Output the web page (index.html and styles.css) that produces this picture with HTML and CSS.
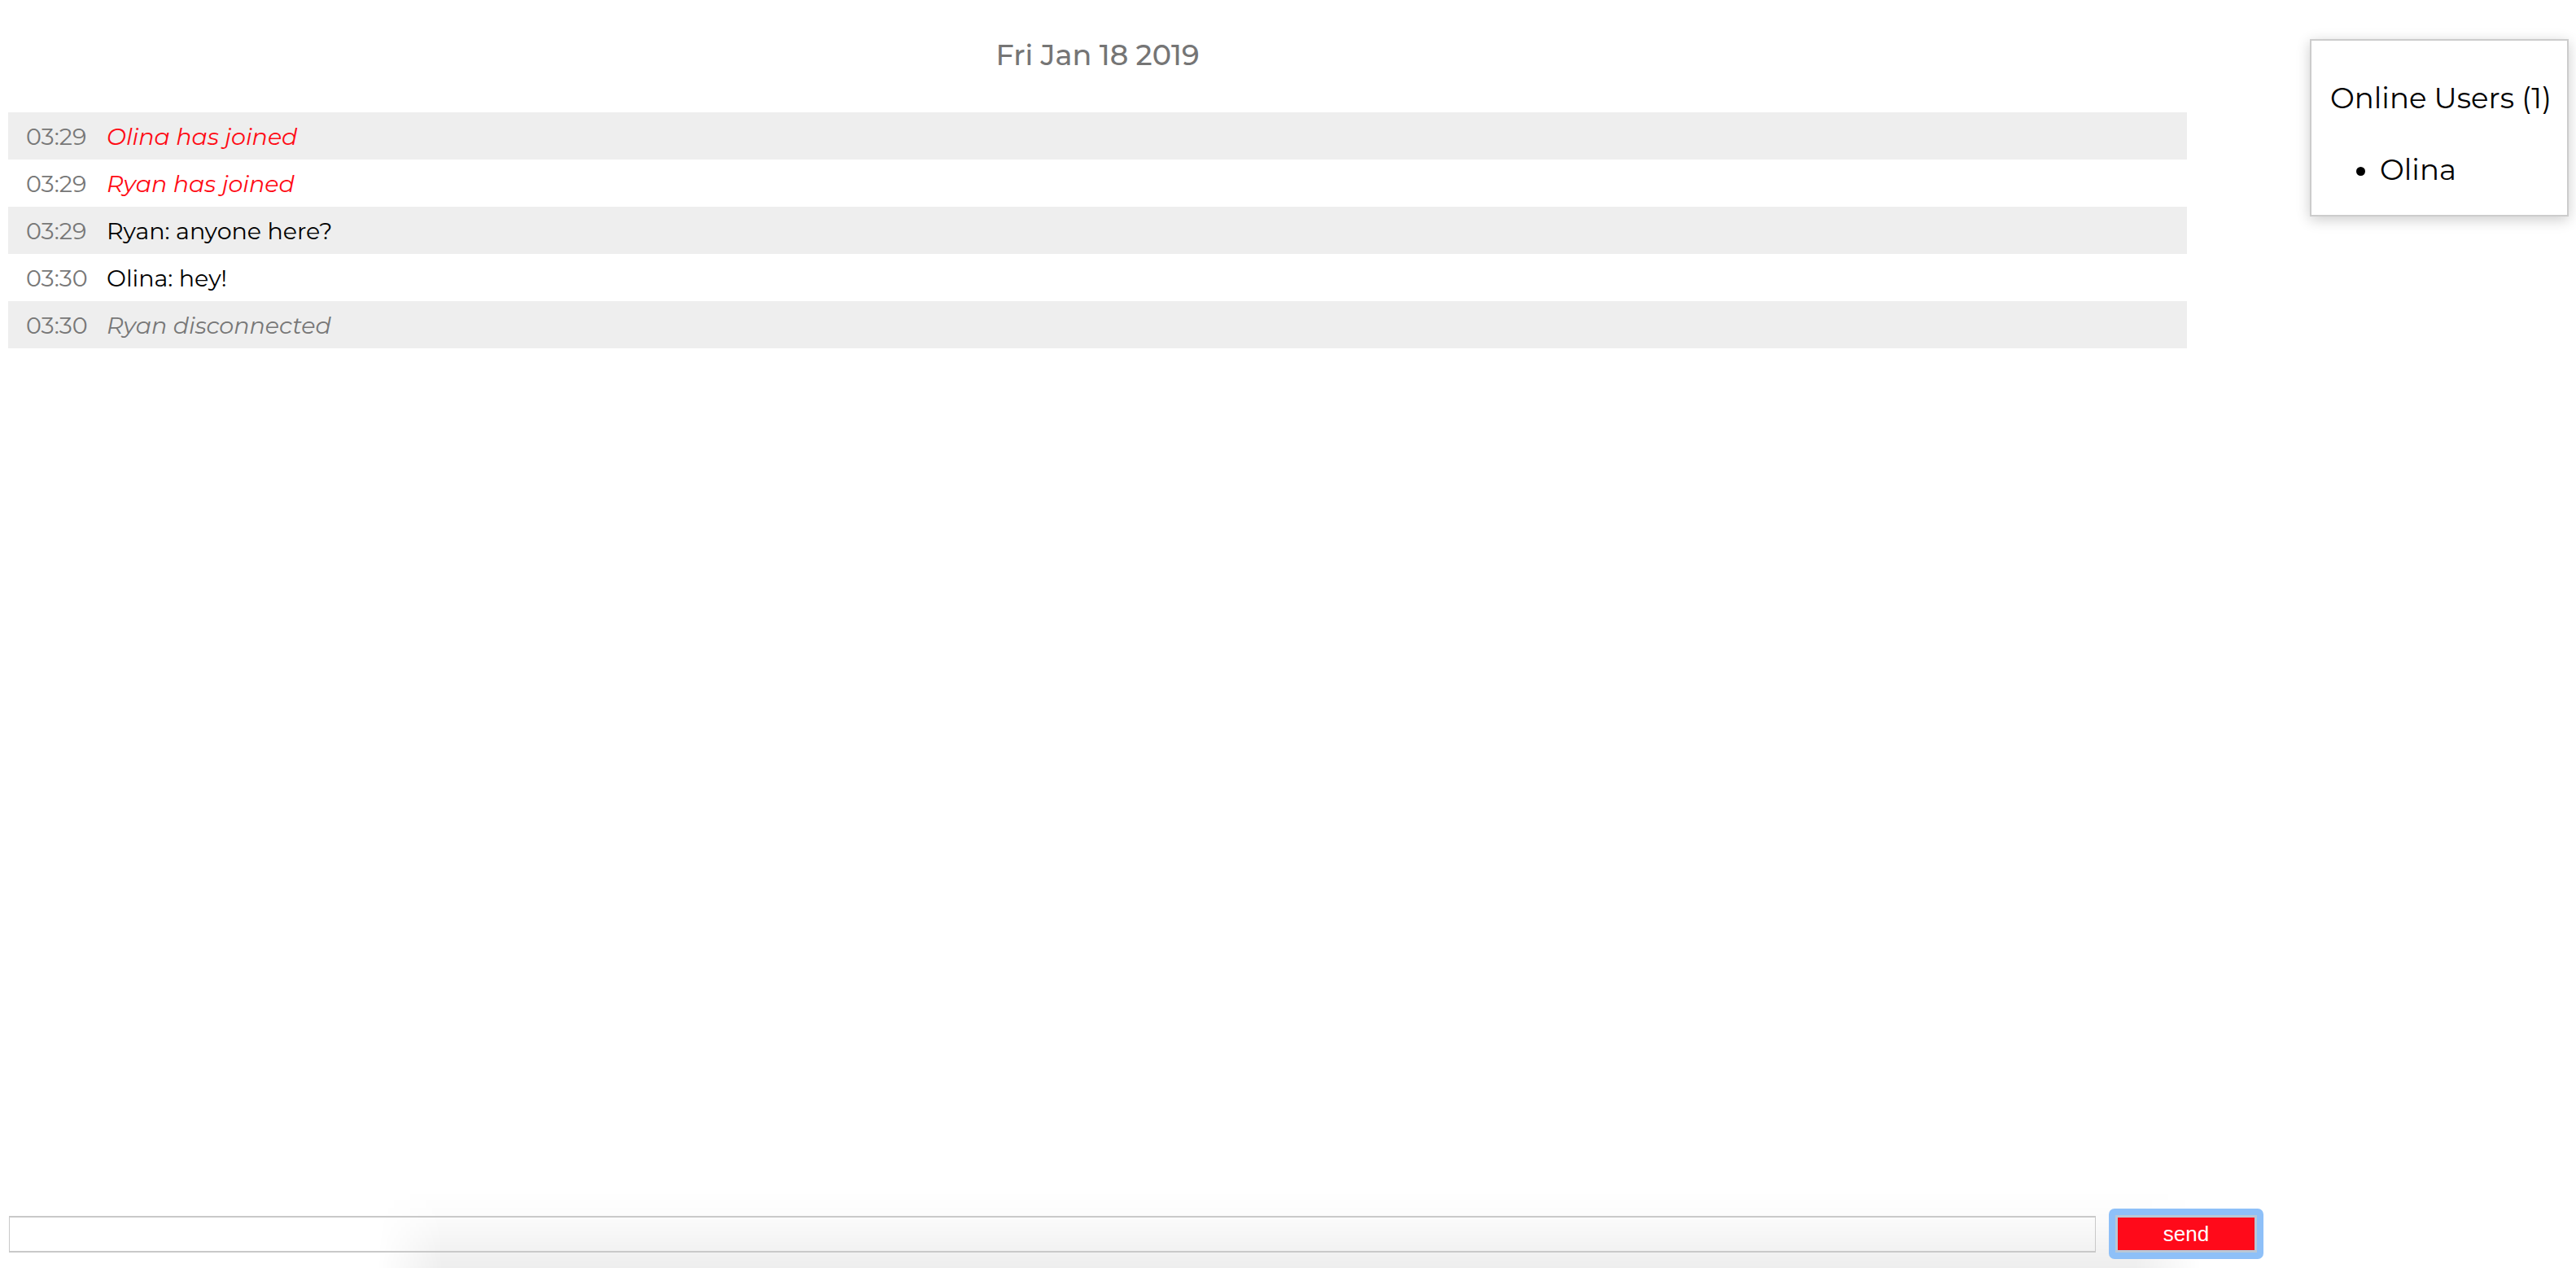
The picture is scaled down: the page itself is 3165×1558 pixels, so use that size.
FILE: index.html
```html
<!DOCTYPE html>
<html>
  <!-- START OF HEAD SECTION -->
  <head>
    <meta charset="utf-8" />
    <title>Chat Room</title>
    <!-- START OF STYLE SECTION -->
    <link rel="stylesheet" href="styles.css">
    <!-- END OF STYLE SECTION -->
  </head>
  <!-- END OF HEAD SECTION -->
  <!-- START OF BODY SECTION -->
  <body class="chatPage">
    <div class="chatLayout">
      <div class="chatMain">
        <div class="chatDate">Fri Jan 18 2019</div>
        <ul class="messageList">
          <li class="messageRow">
            <span class="messageTime">03:29</span>
            <span class="messageText joinedText">Olina has joined</span>
          </li>
          <li class="messageRow">
            <span class="messageTime">03:29</span>
            <span class="messageText joinedText">Ryan has joined</span>
          </li>
          <li class="messageRow">
            <span class="messageTime">03:29</span>
            <span class="messageText">Ryan: anyone here?</span>
          </li>
          <li class="messageRow">
            <span class="messageTime">03:30</span>
            <span class="messageText">Olina: hey!</span>
          </li>
          <li class="messageRow">
            <span class="messageTime">03:30</span>
            <span class="messageText leftText">Ryan disconnected</span>
          </li>
        </ul>
      </div>
      <div class="onlineUsers">
        <h3 class="onlineTitle">Online Users (1)</h3>
        <ul class="onlineList">
          <li>Olina</li>
        </ul>
      </div>
    </div>
    <!-- the message form stays at the bottom of the page -->
    <form class="messageForm" onsubmit="return false;">
      <input class="messageInput" type="text" />
      <button class="sendButton" type="submit">send</button>
    </form>
  </body>
  <!-- END OF BODY SECTION -->
</html>
```

FILE: styles.css
```css
html, body {
  height: 100%;
  overflow: hidden;
}
body.chatPage {
  margin: 0;
  display: flex;
  flex-direction: column;
  font-family: "Montserrat", "DejaVu Sans", sans-serif;
  background-color: #ffffff;
}
div.chatLayout {
  flex: 1;
  display: flex;
  align-items: flex-start;
  padding: 0 9px 0 10px;
}
div.chatMain {
  flex: 1;
}
div.chatDate {
  height: 135px;
  padding-bottom: 3px;
  display: flex;
  align-items: center;
  justify-content: center;
  font-size: 35px;
  font-weight: 500;
  color: #757575;
}
ul.messageList {
  list-style: none;
  margin: 0;
  padding: 0;
}
li.messageRow {
  display: flex;
  align-items: center;
  height: 58px;
  padding-left: 22px;
}
li.messageRow:nth-child(odd) {
  background-color: #eeeeee;
}
span.messageTime {
  width: 99px;
  font-size: 28.5px;
  color: #777777;
}
span.messageText {
  font-size: 28.5px;
  color: #000000;
}
span.joinedText {
  font-style: italic;
  color: #ff0a14;
}
span.leftText {
  font-style: italic;
  color: #777777;
}

div.onlineUsers {
  box-sizing: border-box;
  width: 318px;
  margin-top: 48px;
  margin-left: 151px;
  padding: 50px 10px 34px 23px;
  border: 2px solid #cccccc;
  box-shadow: 0 4px 16px rgba(0, 0, 0, 0.2);
  background-color: #ffffff;
}
h3.onlineTitle {
  margin: 0;
  font-size: 35.5px;
  font-weight: normal;
  line-height: 42px;
  white-space: nowrap;
  color: #000000;
}
ul.onlineList {
  margin: 46px 0 0 0;
  padding-left: 61px;
  font-size: 35.5px;
  line-height: 42px;
}

form.messageForm {
  position: relative;
  display: flex;
  align-items: center;
  gap: 16px;
  margin: 0;
  padding: 0 0 11px 11px;
}
/* soft grey shade behind the input */
form.messageForm::before {
  content: "";
  position: absolute;
  z-index: -1;
  left: 464px;
  width: 2240px;
  top: -22px;
  bottom: 0;
  background: linear-gradient(to bottom, rgba(0, 0, 0, 0), rgba(0, 0, 0, 0.015) 35%, rgba(0, 0, 0, 0.05) 78%, rgba(0, 0, 0, 0.068));
  -webkit-mask-image: linear-gradient(to right, transparent, #000 80px, #000 calc(100% - 80px), transparent);
  mask-image: linear-gradient(to right, transparent, #000 80px, #000 calc(100% - 80px), transparent);
}
input.messageInput {
  box-sizing: border-box;
  width: 2564px;
  height: 45px;
  margin: 0;
  border: 2px solid #c9c9c9;
  border-left-width: 1px;
  border-right-width: 1px;
  background-color: transparent;
  outline: none;
}
button.sendButton {
  box-sizing: border-box;
  width: 190px;
  height: 62px;
  margin: 0;
  border: 8px solid #8ec0f8;
  border-radius: 7px;
  box-shadow: inset 0 0 0 3px #b9c7d6;
  background-color: #ff0a1a;
  color: #ffffff;
  font-family: "Liberation Sans", Arial, sans-serif;
  font-size: 26px;
  padding: 0;
}
```
